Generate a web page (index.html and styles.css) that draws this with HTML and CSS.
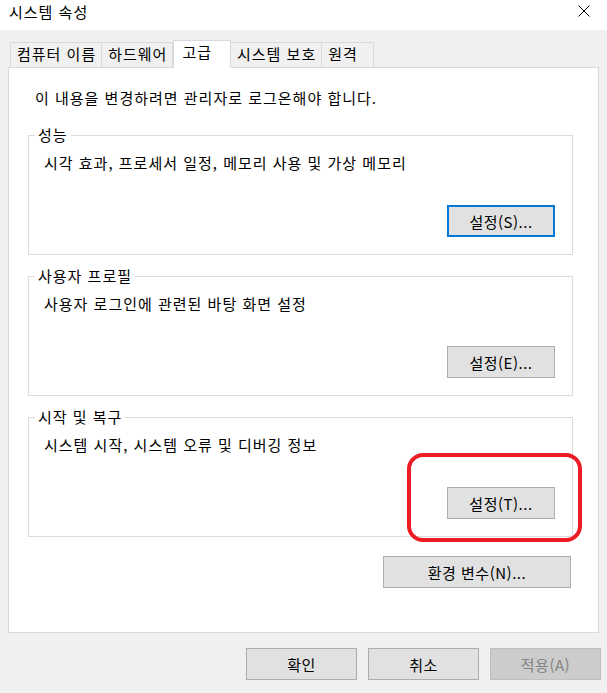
FILE: index.html
```html
<!DOCTYPE html>
<html lang="ko">
<head>
  <meta charset="UTF-8">
  <title>시스템 속성</title>
  <link rel="stylesheet" href="styles.css">
</head>
<body>
  <div class="window">
    <header class="titlebar">
      <span class="title">시스템 속성</span>
      <button class="close" aria-label="닫기">
        <svg width="12" height="12" viewBox="0 0 12 12">
          <path d="M0.5 0.5 L11.5 11.5 M11.5 0.5 L0.5 11.5" stroke="#000" stroke-width="1" fill="none"/>
        </svg>
      </button>
    </header>

    <div class="client">
      <ul class="tabs">
        <li class="tab">컴퓨터 이름</li>
        <li class="tab">하드웨어</li>
        <li class="tab active">고급</li>
        <li class="tab">시스템 보호</li>
        <li class="tab">원격</li>
      </ul>

      <main class="panel">
        <p class="notice">이 내용을 변경하려면 관리자로 로그온해야 합니다.</p>

        <fieldset class="group">
          <legend>성능</legend>
          <p class="desc">시각 효과, 프로세서 일정, 메모리 사용 및 가상 메모리</p>
          <div class="group-actions">
            <button class="btn focused">설정(S)...</button>
          </div>
        </fieldset>

        <fieldset class="group">
          <legend>사용자 프로필</legend>
          <p class="desc">사용자 로그인에 관련된 바탕 화면 설정</p>
          <div class="group-actions">
            <button class="btn">설정(E)...</button>
          </div>
        </fieldset>

        <fieldset class="group">
          <legend>시작 및 복구</legend>
          <p class="desc">시스템 시작, 시스템 오류 및 디버깅 정보</p>
          <div class="group-actions">
            <button class="btn">설정(T)...</button>
          </div>
        </fieldset>

        <div class="env-row">
          <button class="btn wide">환경 변수(N)...</button>
        </div>
      </main>

      <footer class="dialog-buttons">
        <button class="btn dlg">확인</button>
        <button class="btn dlg">취소</button>
        <button class="btn dlg" disabled>적용(A)</button>
      </footer>
    </div>

    <!-- red highlight drawn over the screenshot -->
    <div class="highlight"></div>
  </div>
</body>
</html>
```

FILE: styles.css
```css
* {
  box-sizing: border-box;
}

body {
  margin: 0;
  font-family: "Noto Sans CJK KR", "Noto Sans", sans-serif;
  font-size: 15px;
  letter-spacing: 1px;
  color: #000;
  background-color: #f0f0f0;
}

.window {
  position: relative;
  width: 607px;
  height: 693px;
  overflow: hidden;
}

.titlebar {
  height: 30px;
  background-color: #fff;
  display: flex;
  align-items: center;
  justify-content: space-between;
  padding-left: 9px;
}
.title {
  line-height: 22px;
  margin-top: -7px;
}
.close {
  width: 46px;
  height: 30px;
  border: none;
  background: transparent;
  display: flex;
  align-items: center;
  justify-content: center;
  padding: 0;
  margin-top: -8px;
}

.client {
  background-color: #f0f0f0;
}

.tabs {
  list-style: none;
  margin: 0;
  padding: 12px 0 0 10px;
  display: flex;
  align-items: flex-end;
  height: 37px;
}
.tab {
  height: 25px;
  min-width: 53px;
  line-height: 22px;
  padding: 0 5px 0 6px;
  border: 1px solid #d9d9d9;
  border-bottom: none;
  margin-right: -1px;
  background-color: #f0f0f0;
  white-space: nowrap;
}
.tab.active {
  position: relative;
  z-index: 1;
  height: 28px;
  line-height: 21px;
  padding: 0 18px 0 8px;
  margin: 0 -1px 0 1px;
  background-color: #fff;
  margin-bottom: -1px;
}

.panel {
  margin: 0 8px;
  border: 1px solid #d9d9d9;
  background-color: #fff;
  padding: 20px 25px 44px 19px;
}

.notice {
  margin: 0 0 17px 7px;
  line-height: 20px;
}

.group {
  margin: 0 0 11px 0;
  padding: 8px 17px 17px 15px;
  border: 1px solid #dcdcdc;
  min-width: 0;
}
.group legend {
  margin-left: -9px;
  padding: 0 3px;
  line-height: 20px;
}
.desc {
  margin: 0;
  line-height: 20px;
}
.group-actions {
  display: flex;
  justify-content: flex-end;
  margin-top: 32px;
}

.btn {
  font-family: inherit;
  font-size: 15px;
  letter-spacing: 0.5px;
  color: #000;
  background-color: #e1e1e1;
  border: 1px solid #adadad;
  height: 32px;
  width: 108px;
  padding: 0;
}
.btn.focused {
  border: 2px solid #0078d7;
}
.btn.wide {
  width: 188px;
}
.btn.dlg {
  width: 111px;
}
.btn:disabled {
  background-color: #cccccc;
  border-color: #bfbfbf;
  color: #838383;
}

.env-row {
  display: flex;
  justify-content: flex-end;
  margin-top: 19px;
  padding-right: 2px;
}

.dialog-buttons {
  display: flex;
  justify-content: flex-end;
  gap: 11px;
  padding: 15px 6px 0 0;
}

.highlight {
  position: absolute;
  left: 407px;
  top: 453px;
  width: 175px;
  height: 89px;
  border: 4px solid #ed1c24;
  border-radius: 16px;
}
```
